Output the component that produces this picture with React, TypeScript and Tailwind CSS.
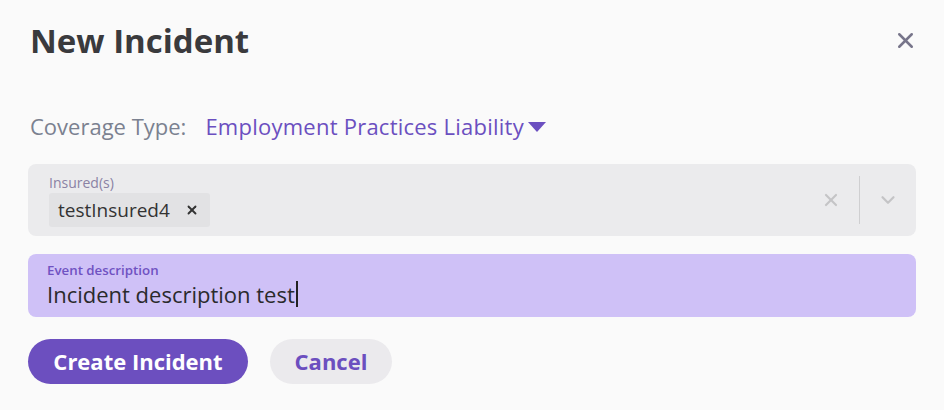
import { X, ChevronDown } from "lucide-react";

export default function App() {
  return (
    <div className="h-[410px] w-[944px] bg-[#fafafa] font-['Open_Sans',sans-serif]">
      <div className="flex items-start justify-between pl-[30px] pr-[26px] pt-[20px]">
        <h2 className="text-[33px] font-bold leading-[42px] text-[#3a3a3d]">New Incident</h2>
        <button type="button" className="mt-[8px] text-[#77758a]">
          <X size={25} strokeWidth={2.4} />
        </button>
      </div>

      <div className="mt-[50px] flex items-center px-[30px] text-[22px] leading-[28px]">
        <span className="text-[#7b8190]">Coverage Type:</span>
        <button type="button" className="ml-[19px] flex items-center tracking-[0.24px] text-[#6b4fc0]">
          Employment Practices Liability
          <svg width="18" height="10" viewBox="0 0 18 10" className="ml-[4px] mt-[2px]">
            <path d="M0 0h18L9 10z" fill="#6b4fc0" />
          </svg>
        </button>
      </div>

      <div className="mx-[28px] mt-[24px] flex h-[72px] items-center rounded-[8px] bg-[#ebebed]">
        <div className="flex flex-1 flex-col pl-[21px] pt-[2px]">
          <span className="text-[14px] font-medium leading-[16px] text-[#8a82a4]">Insured(s)</span>
          <div className="mt-[2px] flex">
            <span className="flex h-[34px] items-center rounded-[3px] bg-[#e2e2e4] pl-[9px] pr-[11px] text-[19px] text-[#333]">
              testInsured4
              <X size={14} strokeWidth={3.2} className="ml-[15px] text-[#333]" />
            </span>
          </div>
        </div>
        <div className="flex h-full items-center">
          <X size={20} strokeWidth={2.6} className="mr-[18px] text-[#c4c4c6]" />
          <div className="h-[48px] w-px bg-[#cfcfd1]" />
          <ChevronDown size={22} strokeWidth={2.4} className="mx-[17px] text-[#c4c4c6]" />
        </div>
      </div>

      <div className="mx-[28px] mt-[18px] flex h-[63px] flex-col rounded-[8px] bg-[#cfc1f7] pl-[19px] pt-[8px]">
        <span className="text-[13.3px] font-semibold leading-[16px] text-[#6f52c2]">Event description</span>
        <span className="mt-[1px] flex items-center text-[22px] leading-[30px] text-[#2a2a2c]">
          Incident description test
          <span className="ml-px h-[26px] w-[2px] bg-[#222]" />
        </span>
      </div>

      <div className="mt-[22px] flex gap-[22px] px-[28px]">
        <button type="button" className="h-[45px] w-[220px] rounded-full bg-[#6c4fbf] text-[22px] font-bold text-white">
          Create Incident
        </button>
        <button type="button" className="h-[45px] w-[122px] rounded-full bg-[#ebeaed] text-[22px] font-bold text-[#6c4fbf]">
          Cancel
        </button>
      </div>
    </div>
  );
}
